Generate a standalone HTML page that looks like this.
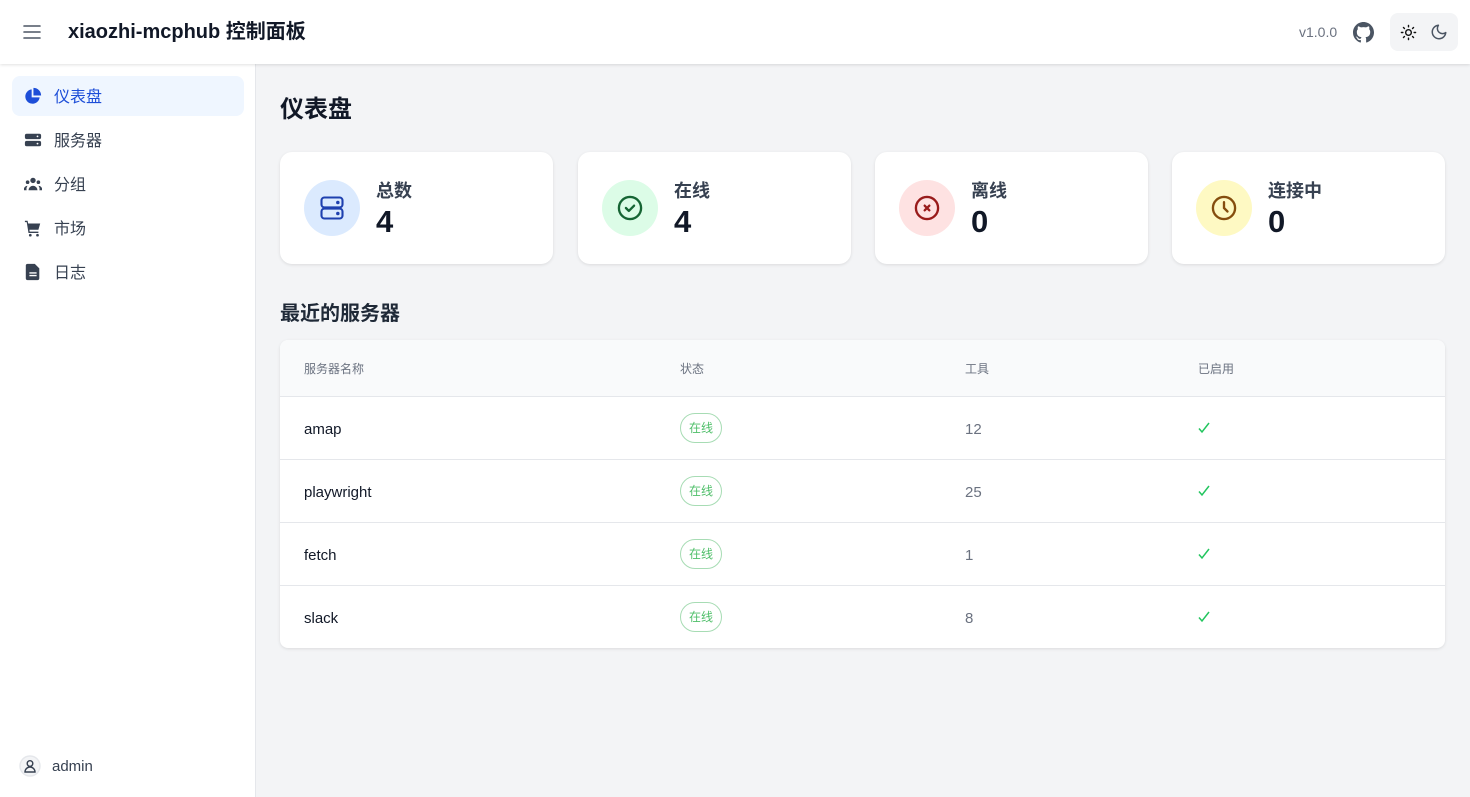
<!DOCTYPE html>
<html><head><meta charset="utf-8"><style>
*{box-sizing:border-box;margin:0;padding:0}
body{width:1470px;height:797px;overflow:hidden;font-family:"Liberation Sans","Noto Sans CJK SC",sans-serif;background:#f3f4f6;position:relative;color:#111827}
.hdr{position:absolute;left:0;top:0;width:1470px;height:64px;background:#fff;box-shadow:0 1px 3px rgba(0,0,0,.12);z-index:2}
.side{position:absolute;left:0;top:64px;width:256px;height:733px;background:#fff;border-right:1px solid #e5e7eb}
.nav{position:absolute;left:12px;width:232px;height:40px;border-radius:8px;font-size:16px;color:#374151}
.nav svg{position:absolute;left:12px;top:11px}
.nav span{position:absolute;left:42px;top:11px;line-height:22px}
.card{position:absolute;top:152px;width:273px;height:112px;background:#fff;border-radius:12px;box-shadow:0 1px 3px rgba(0,0,0,.1)}
.circ{position:absolute;left:24px;top:28px;width:56px;height:56px;border-radius:50%;display:flex;align-items:center;justify-content:center}
.lbl{position:absolute;left:96px;top:25px;font-size:18px;font-weight:600;color:#374151}
.num{position:absolute;left:96px;top:52px;font-size:31px;font-weight:700;color:#111827}
.tbl{position:absolute;left:280px;top:340px;width:1165px;height:308px;background:#fff;border-radius:8px;box-shadow:0 1px 3px rgba(0,0,0,.1);overflow:hidden}
.th{position:absolute;left:0;top:0;width:100%;height:57px;background:#f9fafb;border-bottom:1px solid #e5e7eb;font-size:12px;color:#6b7280}
.th div,.row div{position:absolute}
.row{position:absolute;left:0;width:100%;height:63px;border-bottom:1px solid #e5e7eb;font-size:15px}
.badge{top:16px;left:400px;width:42px;height:30px;border:1px solid #a7dcb4;border-radius:15px;font-size:12px;color:#4fbf6a;text-align:center;line-height:29px}
.ck{left:918px;top:25px}
</style></head><body>
<div class="hdr">
<svg style="position:absolute;left:22px;top:22px" width="20" height="20" viewBox="0 0 20 20" fill="none" stroke="#4b5563" stroke-width="1.6" stroke-linecap="round"><path d="M2 4h16M2 10h16M2 16h16"/></svg>
<div style="position:absolute;left:68px;top:18px;font-size:20px;font-weight:700;color:#111827;line-height:28px">xiaozhi-mcphub 控制面板</div>
<div style="position:absolute;left:1299px;top:24px;font-size:14px;color:#6b7280">v1.0.0</div>
<svg style="position:absolute;left:1353px;top:22px" width="21" height="21" viewBox="0 0 16 16" fill="#4b5563"><path d="M8 0C3.58 0 0 3.58 0 8c0 3.54 2.290 6.53 5.470 7.59.4.07.55-.17.55-.38 0-.19-.01-.82-.01-1.49-2.01.37-2.53-.49-2.69-.94-.09-.23-.48-.94-.82-1.130-.28-.15-.68-.52-.01-.53.63-.01 1.08.58 1.23.82.72 1.21 1.87.87 2.33.66.07-.52.28-.87.51-1.070-1.78-.2-3.64-.89-3.64-3.95 0-.87.31-1.59.82-2.15-.08-.2-.36-1.02.08-2.12 0 0 .67-.21 2.2.82.64-.18 1.32-.27 2-.27.68 0 1.36.09 2 .27 1.53-1.04 2.2-.82 2.2-.82.44 1.1.16 1.92.08 2.12.51.56.82 1.27.82 2.15 0 3.07-1.87 3.75-3.65 3.95.29.25.54.73.54 1.48 0 1.07-.01 1.93-.01 2.2 0 .21.15.46.55.38A8.013 8.013 0 0016 8c0-4.42-3.58-8-8-8z"/></svg>
<div style="position:absolute;left:1390px;top:13px;width:68px;height:38px;background:#f3f4f6;border-radius:8px"></div>
<svg style="position:absolute;left:1400px;top:24px" width="17" height="17" viewBox="0 0 24 24" fill="none" stroke="#111" stroke-width="2" stroke-linecap="round"><circle cx="12" cy="12" r="4"/><path d="M12 2v2M12 20v2M4.9 4.9l1.4 1.4M17.7 17.7l1.4 1.4M2 12h2M20 12h2M4.9 19.1l1.4-1.4M17.7 6.3l1.4-1.4"/></svg>
<svg style="position:absolute;left:1430px;top:23px" width="18" height="18" viewBox="0 0 24 24" fill="none" stroke="#4b5563" stroke-width="2" stroke-linecap="round" stroke-linejoin="round"><path d="M21 12.8A9 9 0 1111.2 3a7 7 0 009.8 9.8z"/></svg>
</div>
<div class="side">
<div class="nav" style="top:12px;background:#eff6ff;color:#1d4ed8">
<svg width="18" height="18" viewBox="0 0 20 20" fill="#1d4ed8"><path d="M8.5 2.6A8 8 0 1 0 17.4 11.5H8.5z"/><path d="M10.5 1V9.5H19A8.5 8.5 0 0 0 10.5 1z"/></svg><span>仪表盘</span></div>
<div class="nav" style="top:56px"><svg width="18" height="18" viewBox="0 0 20 20" fill="#374151"><rect x="1" y="3" width="18" height="6" rx="2"/><rect x="1" y="11" width="18" height="6" rx="2"/><circle cx="15" cy="6" r="1" fill="#fff"/><circle cx="15" cy="14" r="1" fill="#fff"/></svg><span>服务器</span></div>
<div class="nav" style="top:100px"><svg width="18" height="18" viewBox="0 0 20 20" fill="#374151"><circle cx="10" cy="6" r="3"/><circle cx="4" cy="8" r="2"/><circle cx="16" cy="8" r="2"/><path d="M5 17a5 5 0 0110 0zM0 17a4 4 0 014-5 5 5 0 00-1 5zM20 17a4 4 0 00-4-5 5 5 0 011 5z"/></svg><span>分组</span></div>
<div class="nav" style="top:144px"><svg width="18" height="18" viewBox="0 0 20 20" fill="#374151"><path d="M1 2h3l.6 3H18l-2 7H6l.3 2H16v1.5H5L3 3.5H1z"/><circle cx="7" cy="18" r="1.5"/><circle cx="15" cy="18" r="1.5"/></svg><span>市场</span></div>
<div class="nav" style="top:188px"><svg width="18" height="18" viewBox="0 0 20 20" fill="#374151"><path d="M4 1h8l5 5v11a2 2 0 01-2 2H4a2 2 0 01-2-2V3a2 2 0 012-2z"/><path d="M6 11h8M6 14h8" stroke="#fff" stroke-width="1.5"/></svg><span>日志</span></div>
<svg style="position:absolute;left:19px;top:691px" width="22" height="22" viewBox="0 0 22 22" fill="none" stroke="#374151" stroke-width="1.4"><circle cx="11" cy="11" r="10" fill="#f3f4f6" stroke="#e5e7eb"/><circle cx="11" cy="8.5" r="2.8"/><path d="M6 17a5 5 0 0110 0z"/></svg>
<div style="position:absolute;left:52px;top:694px;font-size:15px;color:#374151">admin</div>
</div>
<div style="position:absolute;left:280px;top:89px;font-size:24px;font-weight:700">仪表盘</div>
<div class="card" style="left:280px"><div class="circ" style="background:#dbeafe"><svg width="28" height="28" viewBox="0 0 24 24" fill="none" stroke="#1e40af" stroke-width="1.8"><rect x="3" y="3" width="18" height="8.5" rx="2.5"/><rect x="3" y="12.5" width="18" height="8.5" rx="2.5"/><circle cx="17" cy="7.3" r=".6" fill="#1e40af"/><circle cx="17" cy="16.7" r=".6" fill="#1e40af"/></svg></div><div class="lbl">总数</div><div class="num">4</div></div>
<div class="card" style="left:578px"><div class="circ" style="background:#dcfce7"><svg width="28" height="28" viewBox="0 0 24 24" fill="none" stroke="#166534" stroke-width="2" stroke-linecap="round" stroke-linejoin="round"><circle cx="12" cy="12" r="9.5"/><path d="M8.5 12l2.5 2.5 4.5-4.5"/></svg></div><div class="lbl">在线</div><div class="num">4</div></div>
<div class="card" style="left:875px"><div class="circ" style="background:#fee2e2"><svg width="28" height="28" viewBox="0 0 24 24" fill="none" stroke="#991b1b" stroke-width="2" stroke-linecap="round"><circle cx="12" cy="12" r="9.5"/><path d="M10 10l4 4M14 10l-4 4"/></svg></div><div class="lbl">离线</div><div class="num">0</div></div>
<div class="card" style="left:1172px"><div class="circ" style="background:#fef9c3"><svg width="28" height="28" viewBox="0 0 24 24" fill="none" stroke="#854d0e" stroke-width="2" stroke-linecap="round"><circle cx="12" cy="12" r="9.5"/><path d="M12 7v5l3 3"/></svg></div><div class="lbl">连接中</div><div class="num">0</div></div>
<div style="position:absolute;left:280px;top:297px;font-size:20px;font-weight:700;color:#1f2937">最近的服务器</div>
<div class="tbl">
<div class="th"><div style="left:24px;top:20px">服务器名称</div><div style="left:400px;top:20px">状态</div><div style="left:685px;top:20px">工具</div><div style="left:918px;top:20px">已启用</div></div>
<div class="row" style="top:57px"><div style="left:24px;top:24px;font-weight:500">amap</div><div class="badge">在线</div><div style="left:685px;top:24px;color:#6b7280">12</div><svg class="ck" style="position:absolute" width="12" height="12" viewBox="0 0 12 12" fill="none" stroke="#22c55e" stroke-width="1.5"><path d="M1 6.5l3 3.5 7-9"/></svg></div>
<div class="row" style="top:120px"><div style="left:24px;top:24px;font-weight:500">playwright</div><div class="badge">在线</div><div style="left:685px;top:24px;color:#6b7280">25</div><svg class="ck" style="position:absolute" width="12" height="12" viewBox="0 0 12 12" fill="none" stroke="#22c55e" stroke-width="1.5"><path d="M1 6.5l3 3.5 7-9"/></svg></div>
<div class="row" style="top:183px"><div style="left:24px;top:24px;font-weight:500">fetch</div><div class="badge">在线</div><div style="left:685px;top:24px;color:#6b7280">1</div><svg class="ck" style="position:absolute" width="12" height="12" viewBox="0 0 12 12" fill="none" stroke="#22c55e" stroke-width="1.5"><path d="M1 6.5l3 3.5 7-9"/></svg></div>
<div class="row" style="top:246px;border-bottom:none"><div style="left:24px;top:24px;font-weight:500">slack</div><div class="badge">在线</div><div style="left:685px;top:24px;color:#6b7280">8</div><svg class="ck" style="position:absolute" width="12" height="12" viewBox="0 0 12 12" fill="none" stroke="#22c55e" stroke-width="1.5"><path d="M1 6.5l3 3.5 7-9"/></svg></div>
</div>
</body></html>
